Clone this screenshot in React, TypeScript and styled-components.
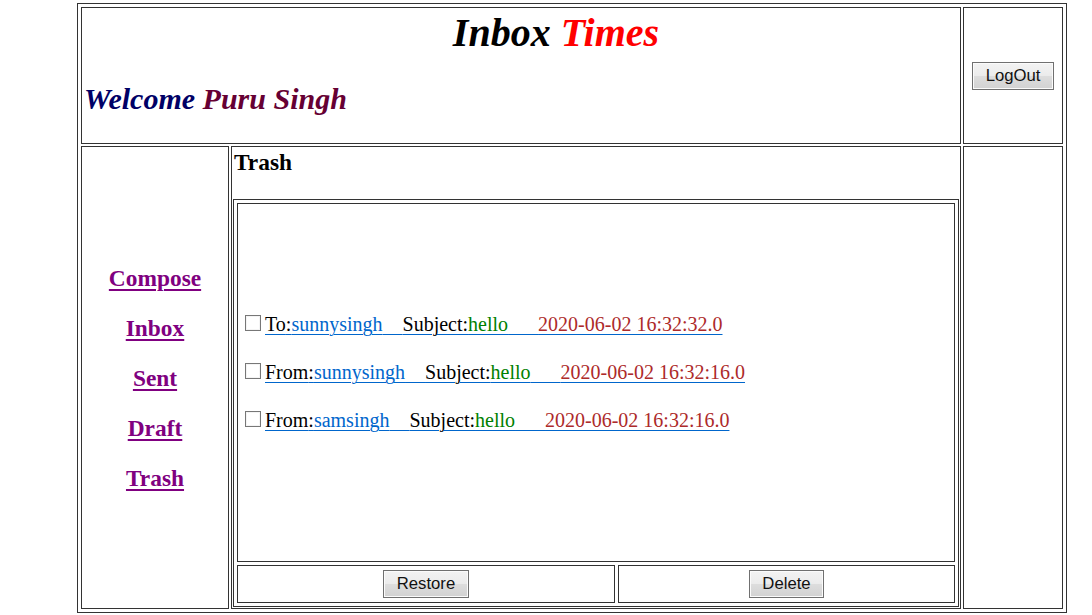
import * as React from 'react'
import styled, { createGlobalStyle } from 'styled-components'

const GlobalStyle = createGlobalStyle`
	html, body {
		margin: 0;
		padding: 0;
		background: #fff;
	}
	body {
		font-family: 'Liberation Serif', 'Times New Roman', serif;
		font-size: 20px;
		color: #000;
	}
	*, *::before, *::after {
		box-sizing: border-box;
	}
`

const Page = styled.div`
	padding: 3px 0 0 77px;
`

const Frame = styled.div`
	width: 990px;
	height: 610px;
	border: 1px solid #333;
	padding: 3px;
	display: grid;
	grid-template-columns: 148px 1fr 100px;
	grid-template-rows: 137px 1fr;
	gap: 2px;
`

const Cell = styled.div<{ $span?: number }>`
	border: 1px solid #333;
	grid-column: span ${p => p.$span || 1};
	min-width: 0;
	min-height: 0;
`

const HeaderCell = styled(Cell)`
	display: flex;
	flex-direction: column;
	padding: 2.5px 2px 0;
`

const Title = styled.h1`
	margin: 0 0 27px;
	padding-left: 70px;
	text-align: center;
	font-size: 40px;
	line-height: 44px;
	font-style: italic;
	font-weight: bold;
`

const Welcome = styled.h2`
	margin: 0;
	font-size: 30px;
	line-height: 34px;
	font-style: italic;
	font-weight: bold;
`

const Tint = styled.span<{ $color: string }>`
	color: ${p => p.$color};
`

const CenterCell = styled(Cell)`
	display: flex;
	align-items: center;
	justify-content: center;
`

const Button = styled.button`
	font-family: 'Liberation Sans', Arial, sans-serif;
	font-size: 16.7px;
	height: 28px;
	padding: 0 12.5px;
	color: #111;
	border: 1px solid #707070;
	border-radius: 0;
	background: linear-gradient(#f3f3f3 0%, #ebebeb 50%, #dddddd 51%, #d2d2d2 100%);
	box-shadow: inset 0 0 0 1px #fbfbfb;
	cursor: pointer;
`

const Nav = styled(Cell)`
	display: flex;
	flex-direction: column;
	align-items: center;
	justify-content: center;
	gap: 24px;
`

const NavLink = styled.a`
	font-size: 23.4px;
	line-height: 26px;
	font-weight: bold;
	color: #800080;
	text-decoration: underline;
	text-decoration-thickness: 2px;
	text-underline-offset: 3px;
`

const Main = styled(Cell)`
	display: flex;
	flex-direction: column;
	padding: 1px;
`

const Heading = styled.h3`
	margin: 1px 0 23px 1px;
	font-size: 23.4px;
	line-height: 27px;
	font-weight: bold;
`

const Inner = styled.div`
	flex: 1;
	border: 1px solid #333;
	padding: 3px;
	display: grid;
	grid-template-columns: 379fr 338fr;
	grid-template-rows: 1fr 38px;
	gap: 3px;
`

const MailList = styled(Cell)`
	display: flex;
	flex-direction: column;
	justify-content: center;
	gap: 24px;
	padding: 0 0 21px 7px;
`

const MailRow = styled.div`
	line-height: 24px;
	white-space: nowrap;
`

const Check = styled.span`
	display: inline-block;
	width: 16px;
	height: 16px;
	margin: 0 4px 0 0;
	vertical-align: baseline;
	border: 1px solid #777;
	background: #fff;
	box-shadow: inset 0 0 0 1px #f4f4f4;
`

const MailLink = styled.a`
	color: #0066cc;
	text-decoration: underline;
	text-decoration-color: #0066cc;
	text-decoration-thickness: 1px;
	text-underline-offset: 3px;
`

const mails = [
	{ dir: 'To', who: 'sunnysingh', date: '2020-06-02 16:32:32.0' },
	{ dir: 'From', who: 'sunnysingh', date: '2020-06-02 16:32:16.0' },
	{ dir: 'From', who: 'samsingh', date: '2020-06-02 16:32:16.0' },
]

const navItems = ['Compose', 'Inbox', 'Sent', 'Draft', 'Trash']

const App = () => (
	<Page>
		<GlobalStyle />
		<Frame>
			<HeaderCell $span={2}>
				<Title>
					Inbox <Tint $color='#ff0000'>Times</Tint>
				</Title>
				<Welcome>
					<Tint $color='#000066'>Welcome</Tint>{' '}
					<Tint $color='#660033'>Puru Singh</Tint>
				</Welcome>
			</HeaderCell>
			<CenterCell>
				<Button>LogOut</Button>
			</CenterCell>

			<Nav>
				{navItems.map(item => (
					<NavLink key={item} href='#'>
						{item}
					</NavLink>
				))}
			</Nav>
			<Main>
				<Heading>Trash</Heading>
				<Inner>
					<MailList $span={2}>
						{mails.map((m, i) => (
							<MailRow key={i}>
								<Check />
								<MailLink href='#'>
									<Tint $color='#000'>{m.dir}:</Tint>
									{m.who}
									{'\u00a0\u00a0\u00a0\u00a0'}
									<Tint $color='#000'>Subject:</Tint>
									<Tint $color='#008000'>hello</Tint>
									{'\u00a0\u00a0\u00a0\u00a0\u00a0\u00a0'}
									<Tint $color='#ad2a2a'>{m.date}</Tint>
								</MailLink>
							</MailRow>
						))}
					</MailList>
					<CenterCell>
						<Button>Restore</Button>
					</CenterCell>
					<CenterCell>
						<Button>Delete</Button>
					</CenterCell>
				</Inner>
			</Main>
			<Cell />
		</Frame>
	</Page>
)

export default App
